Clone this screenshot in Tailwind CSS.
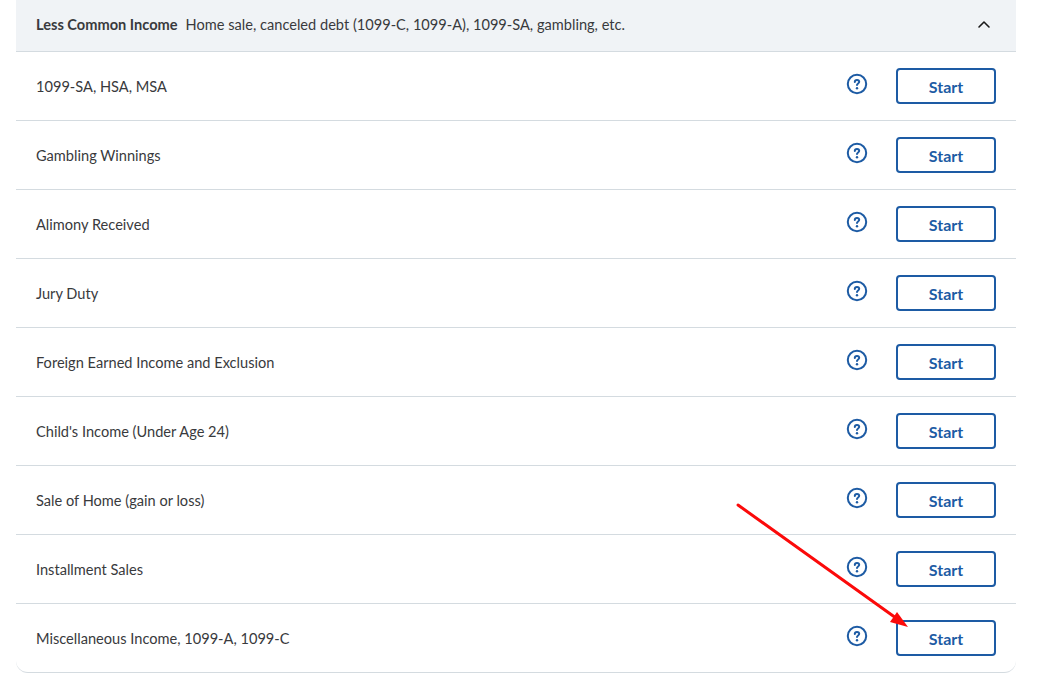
<!DOCTYPE html>
<html lang="en">
    <head>
        <meta charset="UTF-8" />
        <title>Less Common Income</title>
        <script src="https://cdn.jsdelivr.net/npm/@tailwindcss/browser@4"></script>
    </head>
    <body class="bg-white font-['Lato',sans-serif] text-[#393a3d] overflow-hidden">
        <div class="relative h-[691px] w-[1054px]">
            <div class="ml-4 w-[1000px]">
                <!-- Section header -->
                <div class="flex h-[52px] items-center justify-between border-b border-[#d4dbe0] bg-[#f0f3f6] pb-0.5 pl-5 pr-[25px]">
                    <div class="flex items-center gap-2 pt-px text-[14.6px]">
                        <span class="font-bold">Less Common Income</span>
                        <span>Home sale, canceled debt (1099-C, 1099-A), 1099-SA, gambling, etc.</span>
                    </div>
                    <svg width="14" height="10" viewBox="0 0 14 10" fill="none" stroke="#1a1a1a" stroke-width="1.6" stroke-linecap="round" stroke-linejoin="round"><path d="M2 7l5-5 5 5" /></svg>
                </div>

                <!-- Rows -->
                <div id="rows" class="rounded-b-xl"></div>
            </div>

            <!-- Annotation arrow -->
            <svg class="absolute left-0 top-0" width="1054" height="691" fill="none">
                <path d="M738 505L896 618" stroke="#fb0a0a" stroke-width="3" stroke-linecap="round" />
                <path d="M908 627L890 622L897 612Z" fill="#fb0a0a" />
            </svg>
        </div>

        <script>
            const rows = [
                "1099-SA, HSA, MSA",
                "Gambling Winnings",
                "Alimony Received",
                "Jury Duty",
                "Foreign Earned Income and Exclusion",
                "Child's Income (Under Age 24)",
                "Sale of Home (gain or loss)",
                "Installment Sales",
                "Miscellaneous Income, 1099-A, 1099-C",
            ];

            document.getElementById("rows").innerHTML = rows
                .map(
                    (label) => `
                <div class="flex h-[69px] items-center justify-between border-b border-[#d4dbe0] pl-5 pr-5 last:rounded-b-xl">
                    <span class="pt-px text-[14.6px]">${label}</span>
                    <div class="flex items-center gap-7">
                        <svg class="mb-1" width="22" height="22" viewBox="0 0 22 22" fill="none">
                            <circle cx="11" cy="11" r="9.2" stroke="#1d5ba4" stroke-width="2" />
                            <path d="M8.8 9c0-1.3.9-2.1 2.2-2.1s2.2.8 2.2 1.9c0 1.7-2.2 1.6-2.2 3.3" stroke="#1d5ba4" stroke-width="2" stroke-linecap="round" />
                            <circle cx="11" cy="15.3" r="1.2" fill="#1d5ba4" />
                        </svg>
                        <button class="h-9 w-[100px] rounded border-2 border-[#1d5ba4] pt-0.5 text-base font-bold text-[#1d5ba4]">Start</button>
                    </div>
                </div>`
                )
                .join("");
        </script>
    </body>
</html>
